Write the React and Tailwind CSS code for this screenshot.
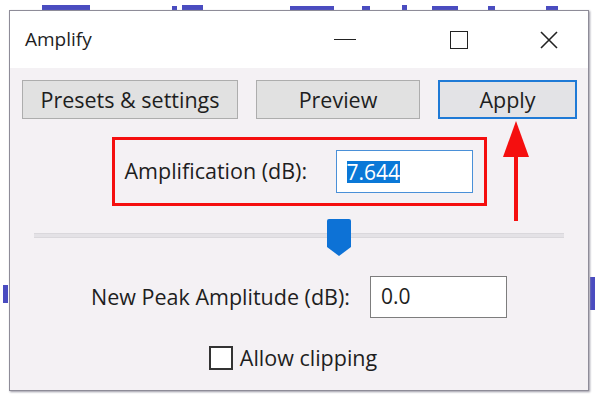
export default function App() {
  return (
    <div
      className="relative h-[399px] w-[600px] overflow-hidden bg-white"
      style={{ fontFamily: '"Open Sans", "Noto Sans", sans-serif' }}
    >
      {/* waveform scraps behind the dialog */}
      <svg className="absolute left-0 top-0" width="600" height="399">
        <g fill="#4a4cc0">
          <rect x="42" y="5" width="48" height="5" />
          <rect x="172" y="6" width="5" height="4" />
          <rect x="182" y="5" width="21" height="5" />
          <rect x="290" y="6" width="44" height="4" />
          <rect x="362" y="6" width="8" height="4" />
          <rect x="402" y="5" width="5" height="5" />
          <rect x="432" y="6" width="26" height="4" />
          <rect x="488" y="6" width="7" height="4" />
          <rect x="546" y="6" width="12" height="4" />
          <rect x="590" y="277" width="5" height="33" />
          <rect x="3" y="285" width="5" height="18" />
        </g>
      </svg>

      <div className="relative ml-[9px] mt-[10px] flex h-[381px] w-[580px] flex-col border border-[#8e8c98] bg-[#f4f1f4] shadow-[1px_1px_2px_#9a98a4]">
        {/* title bar */}
        <div className="flex h-[57px] items-center bg-white pl-[15px]">
          <span className="text-[19px] text-[#1e1e1e]">Amplify</span>
          <div className="ml-auto flex h-full items-center">
            <div className="flex w-[70px] items-center justify-center">
              <div className="h-[1.5px] w-[22px] bg-[#222]" />
            </div>
            <div className="ml-[64px] flex w-[30px] items-center justify-center">
              <div className="h-[18px] w-[18px] border-[1.5px] border-[#222]" />
            </div>
            <div className="ml-[64px] mr-[28px] flex w-[22px] items-center justify-center">
              <svg width="20" height="20" viewBox="0 0 20 20">
                <path d="M2 2 L18 18 M18 2 L2 18" stroke="#222" strokeWidth="1.6" />
              </svg>
            </div>
          </div>
        </div>

        {/* body */}
        <div className="relative flex flex-1 flex-col">
          <div className="mt-[12px] flex gap-[18px] pl-[12px]">
            <button className="h-[39px] w-[216px] border border-[#adadad] bg-[#e1e1e1] text-[21.5px] leading-none text-[#1e1e1e]">
              Presets &amp; settings
            </button>
            <button className="h-[39px] w-[164px] border border-[#adadad] bg-[#e1e1e1] text-[21.5px] leading-none text-[#1e1e1e]">
              Preview
            </button>
            <button className="h-[39px] w-[139px] border-2 border-[#1f7ad6] bg-[#e3e3e6] text-[21.5px] leading-none text-[#1e1e1e]">
              Apply
            </button>
          </div>

          <div className="mx-auto mt-[18px] flex h-[69px] w-[375px] items-center border-[3px] border-[#f50f0f] pl-[10px] pr-[11px]">
            <span className="text-[21.5px] text-[#1e1e1e]">Amplification (dB):</span>
            <div className="ml-auto flex h-[43px] w-[137px] items-center border border-[#4a90d8] bg-white pl-[10px]">
              <span className="bg-[#0a78d7] text-[21px] leading-[22px] text-white">7.644</span>
            </div>
          </div>

          <div className="relative mx-[24px] mt-[13px] h-[37px]">
            <div className="absolute left-0 right-0 top-[14px] h-[5px] border-y border-[#dad8dc] bg-[#e4e2e6]" />
            <svg className="absolute left-[293px] top-0" width="24" height="37" viewBox="0 0 24 37">
              <path d="M2 0 H22 Q24 0 24 2 V28 L12 37 L0 28 V2 Q0 0 2 0 Z" fill="#0d72d6" />
            </svg>
          </div>

          <div className="mt-[20px] flex items-center justify-center gap-[20px]">
            <span className="text-[21.5px] text-[#1e1e1e]">New Peak Amplitude (dB):</span>
            <div className="flex h-[42px] w-[137px] items-center border border-[#7d7d7d] bg-white pl-[10px]">
              <span className="text-[21px] text-[#1e1e1e]">0.0</span>
            </div>
          </div>

          <div className="mt-[28px] flex items-center justify-center gap-[7px] pr-[12px]">
            <div className="h-[24px] w-[24px] border-2 border-[#333] bg-white" />
            <span className="text-[21.5px] leading-none text-[#1e1e1e]">Allow clipping</span>
          </div>

          {/* annotation arrow */}
          <svg className="absolute left-[492px] top-[53px]" width="28" height="100" viewBox="0 0 28 100">
            <path d="M14 0 L27 36 L1 36 Z" fill="#f50f0f" />
            <rect x="12" y="34" width="4" height="66" fill="#f50f0f" />
          </svg>
        </div>
      </div>
    </div>
  )
}
